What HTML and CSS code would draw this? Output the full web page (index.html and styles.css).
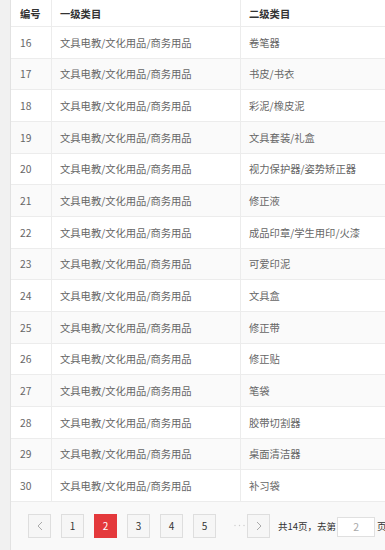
FILE: index.html
```html
<!DOCTYPE html>
<html lang="zh">
<head>
<meta charset="utf-8">
<link rel="stylesheet" href="styles.css">
</head>
<body>
<div class="panel">
  <div class="grid">
    <div class="row head"><div class="c c1">编号</div><div class="c c2">一级类目</div><div class="c c3">二级类目</div></div>
    <div class="row"><div class="c c1">16</div><div class="c c2">文具电教/文化用品/商务用品</div><div class="c c3">卷笔器</div></div>
    <div class="row alt"><div class="c c1">17</div><div class="c c2">文具电教/文化用品/商务用品</div><div class="c c3">书皮/书衣</div></div>
    <div class="row"><div class="c c1">18</div><div class="c c2">文具电教/文化用品/商务用品</div><div class="c c3">彩泥/橡皮泥</div></div>
    <div class="row alt"><div class="c c1">19</div><div class="c c2">文具电教/文化用品/商务用品</div><div class="c c3">文具套装/礼盒</div></div>
    <div class="row"><div class="c c1">20</div><div class="c c2">文具电教/文化用品/商务用品</div><div class="c c3">视力保护器/姿势矫正器</div></div>
    <div class="row alt"><div class="c c1">21</div><div class="c c2">文具电教/文化用品/商务用品</div><div class="c c3">修正液</div></div>
    <div class="row"><div class="c c1">22</div><div class="c c2">文具电教/文化用品/商务用品</div><div class="c c3">成品印章/学生用印/火漆</div></div>
    <div class="row alt"><div class="c c1">23</div><div class="c c2">文具电教/文化用品/商务用品</div><div class="c c3">可爱印泥</div></div>
    <div class="row"><div class="c c1">24</div><div class="c c2">文具电教/文化用品/商务用品</div><div class="c c3">文具盒</div></div>
    <div class="row alt"><div class="c c1">25</div><div class="c c2">文具电教/文化用品/商务用品</div><div class="c c3">修正带</div></div>
    <div class="row"><div class="c c1">26</div><div class="c c2">文具电教/文化用品/商务用品</div><div class="c c3">修正贴</div></div>
    <div class="row alt"><div class="c c1">27</div><div class="c c2">文具电教/文化用品/商务用品</div><div class="c c3">笔袋</div></div>
    <div class="row"><div class="c c1">28</div><div class="c c2">文具电教/文化用品/商务用品</div><div class="c c3">胶带切割器</div></div>
    <div class="row alt"><div class="c c1">29</div><div class="c c2">文具电教/文化用品/商务用品</div><div class="c c3">桌面清洁器</div></div>
    <div class="row"><div class="c c1">30</div><div class="c c2">文具电教/文化用品/商务用品</div><div class="c c3">补习袋</div></div>
  </div>
  <div class="pager">
    <span class="btn"><svg width="6" height="10" viewBox="0 0 6 10"><path d="M5 1 L1 5 L5 9" fill="none" stroke="#aaa" stroke-width="1"/></svg></span>
    <span class="btn">1</span>
    <span class="btn cur">2</span>
    <span class="btn">3</span>
    <span class="btn">4</span>
    <span class="btn">5</span>
    <span class="dots"><svg width="11" height="3" viewBox="0 0 11 3"><circle cx="1" cy="1.5" r="0.7" fill="#ccc"/><circle cx="5.5" cy="1.5" r="0.7" fill="#ccc"/><circle cx="10" cy="1.5" r="0.7" fill="#ccc"/></svg></span>
    <span class="btn last"><svg width="6" height="10" viewBox="0 0 6 10"><path d="M1 1 L5 5 L1 9" fill="none" stroke="#aaa" stroke-width="1"/></svg></span>
    <span class="info">共14页，去第</span>
    <span class="input">2</span>
    <span class="info">页</span>
  </div>
</div>
</body>
</html>
```

FILE: styles.css
```css
html, body {
  margin: 0;
  padding: 0;
}
body {
  background: #f1f1f1;
  width: 385px;
  height: 550px;
  overflow: hidden;
  font-family: "Noto Sans CJK SC", "Noto Sans", sans-serif;
  font-size: 10.3px;
  color: #666;
}
.panel {
  margin-left: 10px;
  border-left: 1px solid #e2e2e2;
  background: #f9f9f9;
  width: 520px;
  height: 550px;
}
.grid {
  background: #fff;
}
.row {
  display: flex;
  height: 31.67px;
  box-sizing: border-box;
  border-bottom: 1px solid #ececec;
}
.row.head {
  height: 27px;
  color: #333;
  font-weight: bold;
}
.row.alt {
  background: #fafafa;
}
.c {
  box-sizing: border-box;
  display: flex;
  align-items: center;
  padding-left: 8px;
  border-right: 1px solid #ececec;
  white-space: nowrap;
}
.c1 { width: 41px; padding-left: 9px; }
.c2 { width: 189px; }
.c3 { width: 290px; }
.pager {
  display: flex;
  align-items: center;
  padding: 12px 0 0 17px;
  height: 24px;
  white-space: nowrap;
}
.btn {
  box-sizing: border-box;
  flex: none;
  width: 23px;
  height: 24px;
  border: 1px solid #dedede;
  background: #f6f6f6;
  color: #333;
  display: flex;
  align-items: center;
  justify-content: center;
  margin-right: 10px;
  font-size: 10px;
}
.btn.cur {
  background: #e4393c;
  border-color: #e4393c;
  color: #fff;
}
.btn.last {
  margin-right: 8px;
}
.dots {
  flex: none;
  width: 21px;
  display: flex;
  align-items: center;
  padding-left: 8px;
  box-sizing: border-box;
}
.info {
  flex: none;
  color: #333;
  font-size: 9.5px;
}
.input {
  flex: none;
  box-sizing: border-box;
  width: 38px;
  height: 20px;
  margin: 2px 2px 0 1px;
  border: 1px solid #e0e0e0;
  background: #fff;
  color: #aaa;
  display: flex;
  align-items: center;
  justify-content: center;
  font-size: 10.5px;
}
```
